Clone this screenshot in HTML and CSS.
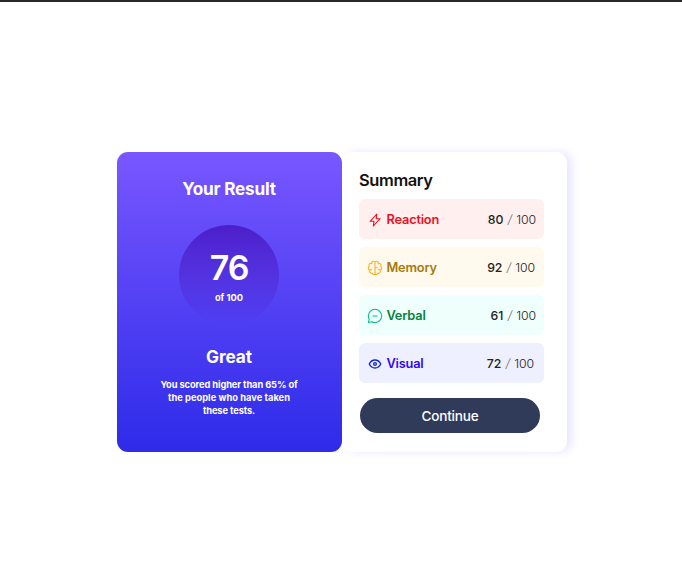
FILE: index.html
```html
<!DOCTYPE html>
<html lang="en">
<head>
<meta charset="utf-8">
<title>Results summary</title>
<link rel="stylesheet" href="styles.css">
</head>
<body>
<main class="card">
  <section class="result">
    <h1 class="result-title"><span>Your Result</span></h1>
    <div class="score"><strong>76</strong><span>of 100</span></div>
    <h2 class="grade"><span>Great</span></h2>
    <p class="note"><span>You scored higher than 65% of</span><br><span class="wide">the people who have taken</span><br><span>these tests.</span></p>
  </section>
  <section class="summary">
    <h2 class="summary-title"><span>Summary</span></h2>
    <ul class="list">
      <li class="row reaction">
        <svg class="icon" viewBox="0 0 20 20"><path d="M11.5 8.333 12.3 2.5l-8.4 9.167h4.8L7.9 17.5l8.4-9.167h-4.8Z"/></svg>
        <span class="name">Reaction</span><span class="value"><b>80</b><i>/</i><em>100</em></span>
      </li>
      <li class="row memory">
        <svg class="icon" viewBox="0 0 20 20"><path d="M5.833 11.667a2.5 2.5 0 1 0 .834 4.858M3.553 13.004a3.333 3.333 0 0 1-.728-5.53m.025-.067a2.083 2.083 0 0 1 2.983-2.824m.199.054A2.083 2.083 0 1 1 10 3.75v12.917a1.667 1.667 0 0 1-3.333 0M10 9.7h3.2m.967 1.967a2.5 2.5 0 1 1-.834 4.858M16.447 13.004a3.334 3.334 0 0 0 .728-5.53m-.025-.067a2.083 2.083 0 0 0-2.983-2.824M10 3.75a2.085 2.085 0 0 1 2.538-2.033 2.084 2.084 0 0 1 1.43 2.92m-.635 12.03a1.667 1.667 0 0 1-3.333 0"/></svg>
        <span class="name">Memory</span><span class="value"><b>92</b><i>/</i><em>100</em></span>
      </li>
      <li class="row verbal">
        <svg class="icon" viewBox="0 0 20 20"><path d="M7.5 10h5M10 18.333A8.333 8.333 0 1 0 1.667 10c0 1.518.406 2.942 1.115 4.167L1.8 18.2l4.033-.982A8.295 8.295 0 0 0 10 18.333Z"/></svg>
        <span class="name">Verbal</span><span class="value"><b>61</b><i>/</i><em>100</em></span>
      </li>
      <li class="row visual">
        <svg class="icon" viewBox="0 0 20 20"><circle cx="10" cy="10" r="1.7"/><path d="M17.2 10c-1.5 2.9-4.1 5-7.2 5s-5.7-2.1-7.2-5C4.3 7.1 6.9 5 10 5s5.7 2.1 7.2 5Z"/></svg>
        <span class="name">Visual</span><span class="value"><b>72</b><i>/</i><em>100</em></span>
      </li>
    </ul>
    <button class="continue" type="button">Continue</button>
  </section>
</main>
</body>
</html>
```

FILE: styles.css
```css
* { box-sizing: border-box; margin: 0; padding: 0; }
body {
  height: 587px;
  overflow: hidden;
  border-top: 2px solid #2b282b;
  padding: 150px 0 0 117px;
  background: #fff;
  font-family: "Inter", sans-serif;
}
.card {
  display: flex;
  width: 450px;
  height: 300px;
}
.result {
  width: 225px;
  padding-right: 1px;
  border-radius: 11px;
  background: linear-gradient(#7857ff, #2e2be9);
  color: #fff;
  text-align: center;
  display: flex;
  flex-direction: column;
  align-items: center;
}
.result-title { margin-top: 26px; font-size: 17.2px; line-height: 22px; letter-spacing: -.2px; }
.score {
  width: 100px;
  height: 100px;
  margin-top: 25px;
  padding-top: 25px;
  border-radius: 50%;
  background: linear-gradient(#4b1fca, #4b1fca00);
  display: flex;
  flex-direction: column;
  align-items: center;
}
.score strong { font-size: 34px; line-height: 36px; font-weight: 600; letter-spacing: -1.2px; }
.score span { margin-top: 5px; font-size: 9.3px; line-height: 14px; font-weight: 700; letter-spacing: 0; }
.grade { margin-top: 21px; font-size: 17.3px; line-height: 22px; letter-spacing: -.1px; }
.note { margin-top: 10px; font-size: 9.3px; line-height: 13px; font-weight: 700; letter-spacing: -.1px; }
.note .wide { letter-spacing: .03px; }
.summary { width: 225px; padding: 17px 23px 0 17px; border-radius: 11px; background: #fff; box-shadow: 5px 0 10px #e8e6ff; clip-path: inset(-15px -20px -15px 0); }
.summary-title { font-size: 16.4px; line-height: 23px; font-weight: 600; letter-spacing: -.35px; color: #111; }
.list { margin-top: 7px; list-style: none; display: flex; flex-direction: column; gap: 8px; }
.row { height: 40px; border-radius: 6px; padding: 1px 8px 0; display: flex; align-items: center; font-size: 12.8px; }
.icon { width: 16px; height: 16px; margin-right: 3.5px; fill: none; stroke: currentColor; stroke-width: 1.35; stroke-linecap: round; stroke-linejoin: round; }
.name { font-weight: 600; letter-spacing: -.2px; }
.value { margin-left: auto; display: flex; color: #222; font-size: 12.3px; letter-spacing: -.1px; }
.value b { font-weight: 500; }
.value i { width: 13px; text-align: center; font-weight: 300; color: #666; }
.value em { font-style: normal; font-weight: 300; }
.reaction { background: #ffefef; color: #f00f20; }
.memory { padding-right: 9px; background: #fff9ee; color: #a67c0b; }
.memory .icon { color: #ffb21e; }
.verbal { background: #effffb; color: #078040; }
.verbal .icon { color: #00bd91; }
.visual { padding-right: 10px; background: #eff0ff; color: #3306f5; }
.visual .icon { color: #1125d6; stroke-width: 1.7; }
.continue {
  display: block;
  width: 180px;
  height: 35px;
  margin: 15px 0 0 1px;
  border: 0;
  border-radius: 18px;
  background: #303b5a;
  color: #fff;
  font: 500 13.6px/36px "Inter", sans-serif;
  letter-spacing: -.2px;
}
```
